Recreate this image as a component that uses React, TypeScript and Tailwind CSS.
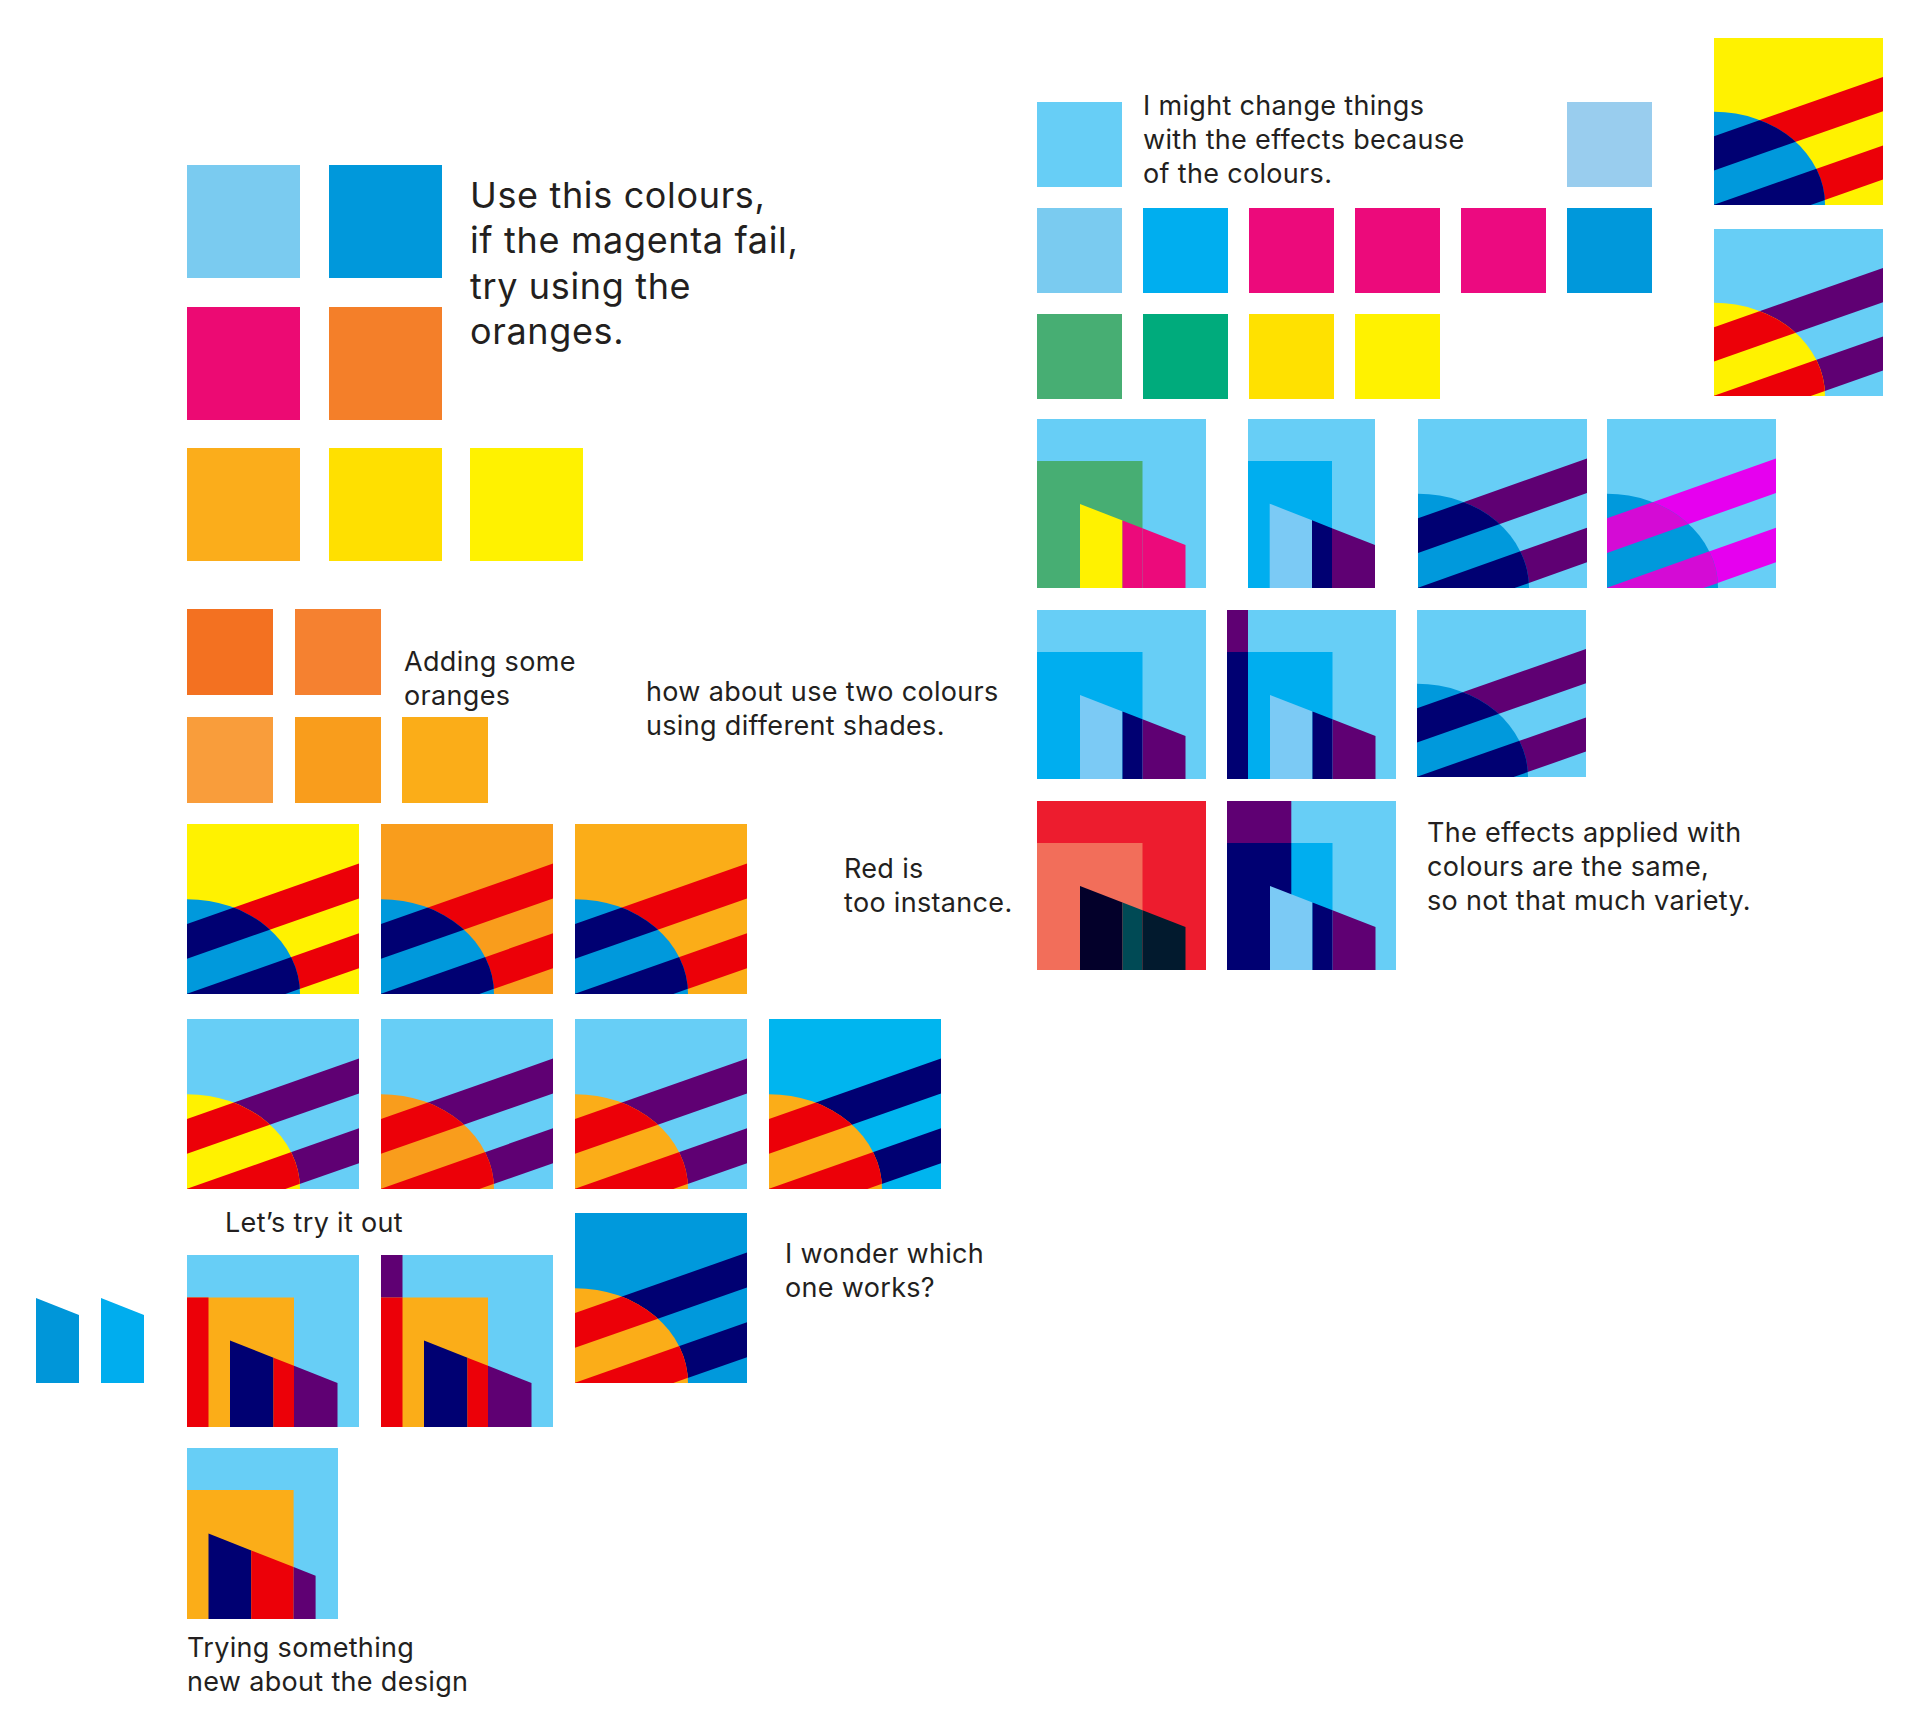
import React from "react";

type SunProps = { id: string; w: number; h: number; bg: string; out: string; sun: string; inn: string };

function Sunrise({ id, w, h, bg, out, sun, inn }: SunProps) {
  const bands = [0, 1].map(
    (k) => `0,${58.8 + 41 * k} 100,${23.3 + 41 * k} 100,${43.8 + 41 * k} 0,${79.3 + 41 * k}`
  );
  return (
    <svg width={w} height={h} viewBox="0 0 100 100" preserveAspectRatio="none" className="block shrink-0">
      <defs>
        <clipPath id={id}>
          <ellipse cx="0" cy="100" rx="65.7" ry="55.8" />
        </clipPath>
      </defs>
      <rect width="100" height="100" fill={bg} />
      {bands.map((p, i) => (
        <polygon key={i} points={p} fill={out} />
      ))}
      <ellipse cx="0" cy="100" rx="65.7" ry="55.8" fill={sun} />
      <g clipPath={`url(#${id})`}>
        {bands.map((p, i) => (
          <polygon key={i} points={p} fill={inn} />
        ))}
      </g>
    </svg>
  );
}

type BProps = {
  w: number;
  h: number;
  bg: string;
  rectX1: number;
  rectY: number;
  rectColor: string;
  strip?: { w: number; top?: string; bottom: string };
  bx0: number;
  bxs: number;
  bx1: number;
  ty0: number;
  ty1: number;
  cl: string;
  ci: string;
  co: string;
};

function Building(p: BProps) {
  const slope = (p.ty1 - p.ty0) / (p.bx1 - p.bx0);
  const y = (x: number) => p.ty0 + (x - p.bx0) * slope;
  const seg = (a: number, b: number) => `${a},${y(a)} ${b},${y(b)} ${b},${p.h} ${a},${p.h}`;
  const r = Math.min(p.rectX1, p.bx1);
  return (
    <svg width={p.w} height={p.h} viewBox={`0 0 ${p.w} ${p.h}`} className="block shrink-0">
      <rect width={p.w} height={p.h} fill={p.bg} />
      <rect x="0" y={p.rectY} width={p.rectX1} height={p.h - p.rectY} fill={p.rectColor} />
      {p.strip && p.strip.top && <rect x="0" y="0" width={p.strip.w} height={p.rectY} fill={p.strip.top} />}
      {p.strip && <rect x="0" y={p.rectY} width={p.strip.w} height={p.h - p.rectY} fill={p.strip.bottom} />}
      <polygon points={seg(p.bx0, p.bxs)} fill={p.cl} />
      <polygon points={seg(p.bxs, r)} fill={p.ci} />
      {p.bx1 > r && <polygon points={seg(r, p.bx1)} fill={p.co} />}
    </svg>
  );
}

const LB = "#67cef6";
const NAVY = "#000072";
const PURPLE = "#5f0073";
const RED = "#ec0008";
const BLUE = "#0099dc";
const YEL = "#fff200";
const OR1 = "#f99d1c";
const OR2 = "#fbad18";
const CYAN = "#00aeef";
const PALEB = "#7bcaf5";

const left172 = { w: 172, h: 172, rectX1: 107, rectY: 42.5, bx0: 43, bxs: 86.5, bx1: 150.5, ty0: 85.5, ty1: 128 };
const right169 = { w: 169, h: 169, rectX1: 105.5, rectY: 42, bx0: 43, bxs: 85.5, bx1: 148.5, ty0: 85, ty1: 126 };

function Sq({ c, s }: { c: string; s: "lg" | "md" | "sm" }) {
  const cls = s === "lg" ? "w-[113px] h-[113px]" : s === "md" ? "w-[86px] h-[86px]" : "w-[85px] h-[85px]";
  return <div className={cls} style={{ backgroundColor: c }} />;
}

function Note({ children, className = "" }: { children: React.ReactNode; className?: string }) {
  return (
    <p className={`text-[27px] leading-[34px] tracking-[0.012em] text-[#231f20] whitespace-nowrap ${className}`}>
      {children}
    </p>
  );
}

export default function App() {
  return (
    <div className="relative w-[1920px] h-[1736px] overflow-hidden bg-white font-['Inter','Liberation_Sans',sans-serif]">
      {/* Top-left palette */}
      <div className="absolute left-[187px] top-[165px] grid grid-cols-[113px_113px_113px] gap-x-[28.5px] gap-y-[28.5px]">
        <Sq c="#7acbf0" s="lg" />
        <Sq c="#0098db" s="lg" />
        <div className="row-span-2 pt-[8px]">
          <p className="text-[36px] leading-[45.4px] tracking-[0.018em] text-[#231f20] whitespace-nowrap">
            Use this colours,
            <br />
            if the magenta fail,
            <br />
            try using the
            <br />
            oranges.
          </p>
        </div>
        <Sq c="#ec0a73" s="lg" />
        <Sq c="#f47f29" s="lg" />
        <Sq c="#fbad1b" s="lg" />
        <Sq c="#ffe000" s="lg" />
        <Sq c="#fff200" s="lg" />
      </div>

      {/* Oranges */}
      <div className="absolute left-[187px] top-[609px] grid grid-cols-[86px_86px_86px] gap-x-[21.5px] gap-y-[22px]">
        <Sq c="#f37121" s="md" />
        <Sq c="#f58130" s="md" />
        <div className="h-[86px] pt-[36px] pl-[2px]">
          <Note>
            Adding some
            <br />
            oranges
          </Note>
        </div>
        <Sq c="#f99d3b" s="md" />
        <Sq c="#f99d1c" s="md" />
        <Sq c="#fbad18" s="md" />
      </div>

      <div className="absolute left-[646px] top-[675px]">
        <Note>
          how about use two colours
          <br />
          using different shades.
        </Note>
      </div>

      {/* Left sunrise row 1 */}
      <div className="absolute left-[187px] top-[824px] flex gap-[22px]">
        <Sunrise id="s1" w={172} h={170} bg={YEL} out={RED} sun={BLUE} inn={NAVY} />
        <Sunrise id="s2" w={172} h={170} bg={OR1} out={RED} sun={BLUE} inn={NAVY} />
        <Sunrise id="s3" w={172} h={170} bg={OR2} out={RED} sun={BLUE} inn={NAVY} />
      </div>

      <div className="absolute left-[844px] top-[852px]">
        <Note>
          Red is
          <br />
          too instance.
        </Note>
      </div>

      {/* Left sunrise row 2 */}
      <div className="absolute left-[187px] top-[1019px] flex gap-[22px]">
        <Sunrise id="s4" w={172} h={170} bg={LB} out={PURPLE} sun={YEL} inn={RED} />
        <Sunrise id="s5" w={172} h={170} bg={LB} out={PURPLE} sun={OR1} inn={RED} />
        <Sunrise id="s6" w={172} h={170} bg={LB} out={PURPLE} sun={OR2} inn={RED} />
        <Sunrise id="s7" w={172} h={170} bg="#00b5ef" out={NAVY} sun={OR2} inn={RED} />
      </div>

      <div className="absolute left-[225px] top-[1206px]">
        <Note>Let’s try it out</Note>
      </div>

      {/* Small shapes */}
      <div className="absolute left-[36px] top-[1298px] flex gap-[22px]">
        <svg width="43" height="85" viewBox="0 0 43 85" className="block">
          <polygon points="0,0 43,17 43,85 0,85" fill="#0096d9" />
        </svg>
        <svg width="43" height="85" viewBox="0 0 43 85" className="block">
          <polygon points="0,0 43,17 43,85 0,85" fill="#00adee" />
        </svg>
      </div>

      {/* Buildings left */}
      <div className="absolute left-[187px] top-[1255px] flex gap-[22px]">
        <Building
          {...left172}
          bg={LB}
          rectColor={OR2}
          strip={{ w: 21.5, bottom: RED }}
          cl={NAVY}
          ci={RED}
          co={PURPLE}
        />
        <Building
          {...left172}
          bg={LB}
          rectColor={OR2}
          strip={{ w: 21.5, top: PURPLE, bottom: RED }}
          cl={NAVY}
          ci={RED}
          co={PURPLE}
        />
      </div>

      <div className="absolute left-[575px] top-[1213px]">
        <Sunrise id="s8" w={172} h={170} bg={BLUE} out={NAVY} sun={OR2} inn={RED} />
      </div>

      <div className="absolute left-[785px] top-[1237px]">
        <Note>
          I wonder which
          <br />
          one works?
        </Note>
      </div>

      {/* Bottom */}
      <div className="absolute left-[187px] top-[1448px] flex flex-col gap-[12px]">
        <Building
          w={151}
          h={171}
          bg={LB}
          rectX1={106.6}
          rectY={42}
          rectColor={OR2}
          bx0={21.5}
          bxs={64.3}
          bx1={128.6}
          ty0={85.6}
          ty1={127.7}
          cl={NAVY}
          ci={RED}
          co={PURPLE}
        />
        <Note>
          Trying something
          <br />
          new about the design
        </Note>
      </div>

      {/* Right swatches */}
      <div className="absolute left-[1037px] top-[102px] grid grid-cols-[85px_85px_85px_85px_85px_85px] gap-[21px]">
        <Sq c={LB} s="sm" />
        <div className="col-span-4 h-[85px] -mt-[13px]">
          <Note>
            I might change things
            <br />
            with the effects because
            <br />
            of the colours.
          </Note>
        </div>
        <Sq c="#99cdee" s="sm" />
        <Sq c="#7acbf0" s="sm" />
        <Sq c={CYAN} s="sm" />
        <Sq c="#ec0a7b" s="sm" />
        <Sq c="#ec0a7b" s="sm" />
        <Sq c="#ec0a80" s="sm" />
        <Sq c="#0098db" s="sm" />
        <Sq c="#47ae73" s="sm" />
        <Sq c="#00ab7c" s="sm" />
        <Sq c="#ffe100" s="sm" />
        <Sq c="#fff200" s="sm" />
      </div>

      {/* Top right posters */}
      <div className="absolute left-[1714px] top-[38px] flex flex-col gap-[24px]">
        <Sunrise id="s9" w={169} h={167} bg={YEL} out={RED} sun={BLUE} inn={NAVY} />
        <Sunrise id="s10" w={169} h={167} bg={LB} out={PURPLE} sun={YEL} inn={RED} />
      </div>

      {/* Right row 1 */}
      <div className="absolute left-[1037px] top-[419px] flex">
        <Building {...right169} bg={LB} rectColor="#47ae73" cl={YEL} ci="#ec0a7b" co="#ec0a7b" />
        <div className="ml-[42px]">
          <Building
            w={127}
            h={169}
            bg={LB}
            rectX1={84}
            rectY={42}
            rectColor={CYAN}
            bx0={21.7}
            bxs={64}
            bx1={127}
            ty0={84.7}
            ty1={126}
            cl={PALEB}
            ci={NAVY}
            co={PURPLE}
          />
        </div>
        <div className="ml-[43px]">
          <Sunrise id="s11" w={169} h={169} bg={LB} out={PURPLE} sun={BLUE} inn={NAVY} />
        </div>
        <div className="ml-[20px]">
          <Sunrise id="s12" w={169} h={169} bg={LB} out="#e600ef" sun={BLUE} inn="#d40bd5" />
        </div>
      </div>

      {/* Right rows 2-3 */}
      <div className="absolute left-[1037px] top-[610px] grid grid-cols-[169px_169px_169px] gap-x-[21px] gap-y-[21.5px]">
        <Building {...right169} bg={LB} rectColor={CYAN} cl={PALEB} ci={NAVY} co={PURPLE} />
        <Building
          {...right169}
          bg={LB}
          rectColor={CYAN}
          strip={{ w: 21, top: PURPLE, bottom: NAVY }}
          cl={PALEB}
          ci={NAVY}
          co={PURPLE}
        />
        <Sunrise id="s13" w={169} h={167} bg={LB} out={PURPLE} sun={BLUE} inn={NAVY} />
        <Building
          {...right169}
          bg="#ed1c2e"
          rectColor="#f26e5a"
          cl="#03002a"
          ci="#004a55"
          co="#021a2e"
        />
        <Building
          {...right169}
          bg={LB}
          rectColor={CYAN}
          strip={{ w: 64.3, top: PURPLE, bottom: NAVY }}
          cl={PALEB}
          ci={NAVY}
          co={PURPLE}
        />
        <div className="h-[169px] pl-[10px] pt-[15.5px]">
          <Note>
            The effects applied with
            <br />
            colours are the same,
            <br />
            so not that much variety.
          </Note>
        </div>
      </div>
    </div>
  );
}
